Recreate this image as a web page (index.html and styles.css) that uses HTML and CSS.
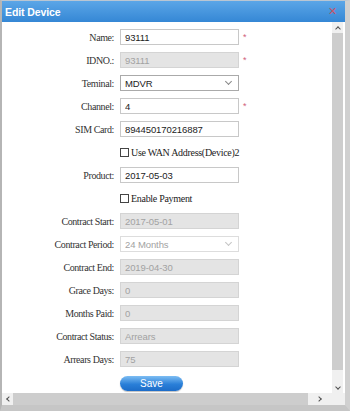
FILE: index.html
```html
<!DOCTYPE html>
<html lang="en">

<head>
  <meta charset="UTF-8" />
  <meta name="viewport" content="width=device-width, initial-scale=1.0" />
  <title>Edit Device</title>
  <link rel="stylesheet" href="styles.css">
</head>

<body>
  <div class="dialog">
    <div class="titlebar">
      <span class="title">Edit Device</span>
      <span class="close">&#x2715;</span>
    </div>

    <div class="frame">
      <div class="viewport">
        <form class="form">
          <div class="row">
            <label>Name:</label>
            <input type="text" value="93111">
            <span class="req">*</span>
          </div>
          <div class="row">
            <label>IDNO.:</label>
            <input type="text" value="93111" disabled>
            <span class="req">*</span>
          </div>
          <div class="row">
            <label>Teminal:</label>
            <div class="select"><span>MDVR</span><i class="chev"></i></div>
          </div>
          <div class="row">
            <label>Channel:</label>
            <input type="text" value="4">
            <span class="req">*</span>
          </div>
          <div class="row">
            <label>SIM Card:</label>
            <input type="text" value="894450170216887">
          </div>
          <div class="row">
            <label></label>
            <span class="check"><i class="box"></i>Use WAN Address(Device)2</span>
          </div>
          <div class="row">
            <label>Product:</label>
            <input type="text" value="2017-05-03">
          </div>
          <div class="row">
            <label></label>
            <span class="check"><i class="box"></i>Enable Payment</span>
          </div>
          <div class="row">
            <label>Contract Start:</label>
            <input type="text" value="2017-05-01" disabled>
          </div>
          <div class="row">
            <label>Contract Period:</label>
            <div class="select disabled"><span>24 Months</span><i class="chev"></i></div>
          </div>
          <div class="row">
            <label>Contract End:</label>
            <input type="text" value="2019-04-30" disabled>
          </div>
          <div class="row">
            <label>Grace Days:</label>
            <input type="text" value="0" disabled>
          </div>
          <div class="row">
            <label>Months Paid:</label>
            <input type="text" value="0" disabled>
          </div>
          <div class="row">
            <label>Contract Status:</label>
            <input type="text" value="Arrears" disabled>
          </div>
          <div class="row">
            <label>Arrears Days:</label>
            <input type="text" value="75" disabled>
          </div>
          <div class="row">
            <label></label>
            <button type="button" class="save">Save</button>
          </div>
        </form>
      </div>

      <!-- fake vertical scrollbar -->
      <div class="vscroll">
        <span class="sarrow"><i class="tip up"></i></span>
        <div class="vthumb"></div>
        <span class="sarrow"><i class="tip down"></i></span>
      </div>
    </div>

    <!-- fake horizontal scrollbar -->
    <div class="hscroll">
      <span class="sarrow"><i class="tip left"></i></span>
      <div class="hthumb"></div>
      <span class="sarrow wide"><i class="tip right"></i></span>
      <div class="corner"></div>
    </div>
  </div>
</body>

</html>
```

FILE: styles.css
```css
/* Base */
body {
  margin: 0;
  background-color: #fff;
  font-family: 'Liberation Sans', Arial, sans-serif;
}

/* Dialog frame */
.dialog {
  width: 350px;
  height: 411px;
  box-sizing: border-box;
  border-top: 1px solid #b9c6d3;
  border-left: 2px solid #b5b5b5;
  border-right: 5px solid #d0d0d0;
  border-bottom: 6px solid #c6c6c6;
  display: flex;
  flex-direction: column;
  background-color: #fff;
}

/* Title bar */
.titlebar {
  height: 21px;
  flex-shrink: 0;
  background: linear-gradient(to bottom, #5ba6e7, #3587d5);
  display: flex;
  align-items: center;
  justify-content: space-between;
  padding: 0 8px 0 3px;
}

.title {
  color: #fff;
  font-weight: bold;
  font-size: 10.5px;
  letter-spacing: -0.1px;
}

.close {
  color: #c4566a;
  font-size: 11px;
  line-height: 1;
}

/* Content + vertical scrollbar */
.frame {
  flex: 1;
  display: flex;
  min-height: 0;
}

.viewport {
  flex: 1;
  overflow: hidden;
}

.form {
  display: flex;
  flex-direction: column;
  gap: 7px;
  padding-top: 7px;
}

.row {
  display: flex;
  align-items: center;
  height: 16px;
}

.row label {
  width: 112px;
  flex-shrink: 0;
  margin-right: 6px;
  text-align: right;
  font-family: 'Liberation Serif', 'Times New Roman', serif;
  font-size: 10px;
  letter-spacing: -0.4px;
  color: #333;
}

.row input,
.select {
  width: 119px;
  height: 16px;
  box-sizing: border-box;
  border: 1px solid #c8c8c8;
  padding: 0 4px;
  font-family: 'Liberation Sans', Arial, sans-serif;
  font-size: 9.5px;
  letter-spacing: -0.1px;
  color: #222;
  background-color: #fff;
  outline: none;
}

.row input:disabled {
  background-color: #e4e4e4;
  border-color: #d4d4d4;
  color: #a2a2a2;
}

.select {
  display: flex;
  align-items: center;
  justify-content: space-between;
  border-color: #aaa;
}

.select.disabled {
  border-color: #ddd;
  color: #a2a2a2;
}

.chev {
  width: 4px;
  height: 4px;
  border-right: 1px solid #888;
  border-bottom: 1px solid #888;
  transform: rotate(45deg);
  margin: 0 3px 3px 0;
}

.select.disabled .chev {
  border-color: #c4c4c4;
}

.req {
  margin-left: 4px;
  color: #d0607a;
  font-size: 9px;
}

/* Checkbox rows */
.check {
  display: flex;
  align-items: center;
  font-family: 'Liberation Serif', 'Times New Roman', serif;
  font-size: 10px;
  letter-spacing: -0.3px;
  color: #222;
}

.box {
  width: 9px;
  height: 9px;
  border: 1px solid #444;
  box-sizing: border-box;
  margin-right: 2px;
  background-color: #fff;
}

/* Save button */
.save {
  width: 63px;
  height: 15px;
  margin-top: 2px;
  border: none;
  border-radius: 8px;
  background: linear-gradient(to bottom, #7dbdf3, #2a7fd8 55%, #1c6cc8);
  color: #fff;
  font-family: 'Liberation Sans', Arial, sans-serif;
  font-size: 10px;
  padding: 0;
  box-shadow: 0 1px 1px rgba(0, 0, 0, 0.25);
}

/* Scrollbars */
.vscroll {
  width: 11px;
  margin-right: 2px;
  flex-shrink: 0;
  background-color: #f0f0f0;
  display: flex;
  flex-direction: column;
}

.vthumb {
  flex: 1;
  margin-bottom: 12px;
  background-color: #cdcdcd;
}

.sarrow {
  width: 11px;
  height: 11px;
  flex-shrink: 0;
  display: flex;
  align-items: center;
  justify-content: center;
}

.sarrow.wide {
  width: 24px;
}

.tip {
  width: 3px;
  height: 3px;
  border-top: 1.5px solid #505050;
  border-left: 1.5px solid #505050;
}

.tip.up {
  transform: translateY(1px) rotate(45deg);
}

.tip.down {
  transform: translateY(-1px) rotate(225deg);
}

.tip.left {
  transform: translateX(1px) rotate(-45deg);
}

.tip.right {
  transform: translateX(-1px) rotate(135deg);
}

.hscroll {
  height: 12px;
  flex-shrink: 0;
  display: flex;
  align-items: center;
  background-color: #f0f0f0;
}

.hthumb {
  width: 295px;
  height: 12px;
  background-color: #cdcdcd;
}

.corner {
  flex: 1;
  height: 12px;
  background-color: #f0f0f0;
}
```
